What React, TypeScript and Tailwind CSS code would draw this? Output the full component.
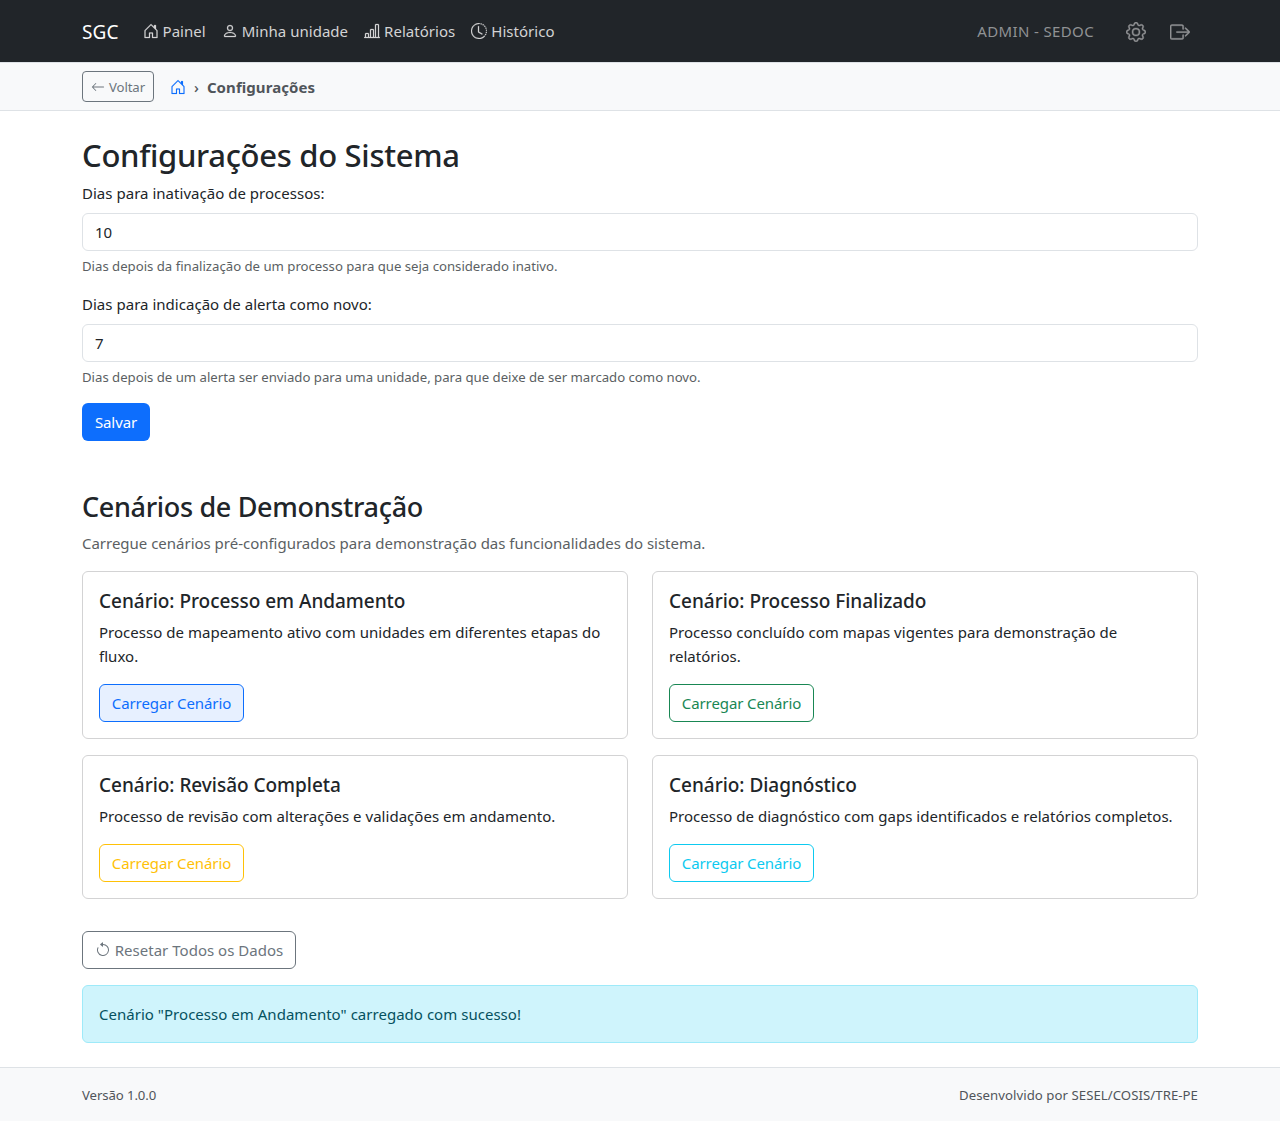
import type { ReactNode } from 'react';
import {
  BsHouseDoor,
  BsPerson,
  BsBarChartLine,
  BsClockHistory,
  BsGear,
  BsBoxArrowRight,
  BsArrowLeft,
  BsArrowCounterclockwise,
} from 'react-icons/bs';

function Container({ className = '', children }: { className?: string; children: ReactNode }) {
  return <div className={`mx-auto w-[1140px] px-3 ${className}`}>{children}</div>;
}

function NavItem({ icon, children }: { icon: ReactNode; children: ReactNode }) {
  return (
    <a href="#" className="flex items-center gap-1 px-2 text-[#d3d3d4]">
      {icon}
      <span>{children}</span>
    </a>
  );
}

function Field({ label, value, help }: { label: string; value: string; help: string }) {
  return (
    <div className="mb-[15px]">
      <label className="mb-2 block leading-6">{label}</label>
      <input
        defaultValue={value}
        className="block h-[38px] w-full rounded-md border border-[#dee2e6] bg-white px-3 leading-6"
      />
      <div className="mt-[5px] text-[13.2px] leading-[21px] tracking-[-0.015px] text-[#5b5f63]">{help}</div>
    </div>
  );
}

const scenarios = [
  {
    title: 'Processo em Andamento',
    text: 'Processo de mapeamento ativo com unidades em diferentes etapas do fluxo.',
    button: 'border-[#0d6efd] bg-[#e7f0ff] text-[#0d6efd]',
  },
  {
    title: 'Processo Finalizado',
    text: 'Processo concluído com mapas vigentes para demonstração de relatórios.',
    button: 'border-[#198754] text-[#198754]',
  },
  {
    title: 'Revisão Completa',
    text: 'Processo de revisão com alterações e validações em andamento.',
    button: 'border-[#ffc107] text-[#ffc107]',
  },
  {
    title: 'Diagnóstico',
    text: 'Processo de diagnóstico com gaps identificados e relatórios completos.',
    button: 'border-[#0dcaf0] text-[#0dcaf0]',
  },
];

export default function App() {
  return (
    <div className="min-h-[1121px] bg-white font-['Noto_Sans',sans-serif] text-[15px] leading-6 tracking-[0.025px] text-[#212529]">
      <nav className="h-[62px] bg-[#212529]">
        <Container className="flex h-full items-center">
          <span className="mr-6 pt-px text-[19px] tracking-[0.1px] text-white">SGC</span>
          <div className="-ml-2 flex">
            <NavItem icon={<BsHouseDoor size={16} strokeWidth={0.25} />}>Painel</NavItem>
            <NavItem icon={<BsPerson size={16} strokeWidth={0.25} />}>Minha unidade</NavItem>
            <NavItem icon={<BsBarChartLine size={16} strokeWidth={0.25} />}>Relatórios</NavItem>
            <NavItem icon={<BsClockHistory size={16} strokeWidth={0.25} />}>Histórico</NavItem>
          </div>
          <div className="ml-auto flex items-center text-[#909294]">
            <span className="mr-8 tracking-[0.36px]">ADMIN - SEDOC</span>
            <BsGear size={20} strokeWidth={0.3} className="mt-px mr-6" />
            <BsBoxArrowRight size={20} strokeWidth={0.3} className="mt-px mr-2" />
          </div>
        </Container>
      </nav>

      <div className="h-[49px] border-y border-[#dee2e6] bg-[#f8f9fa]">
        <Container className="flex h-full items-center">
          <button className="mr-4 flex h-[31px] w-[72px] items-center justify-center gap-1 rounded border border-[#6c757d] text-[13.2px] tracking-[-0.1px] text-[#6c757d]">
            <BsArrowLeft size={14} />
            Voltar
          </button>
          <BsHouseDoor size={16} strokeWidth={0.15} className="text-[#0d6efd]" />
          <span className="mx-2 font-medium text-[#50555a]">›</span>
          <span className="font-bold tracking-[0.07px] text-[#50555a]">Configurações</span>
        </Container>
      </div>

      <Container className="pt-[25px] pb-6">
        <h1 className="mb-[7px] text-[31px] leading-[38.4px] font-medium tracking-[-0.3px]">Configurações do Sistema</h1>
        <Field
          label="Dias para inativação de processos:"
          value="10"
          help="Dias depois da finalização de um processo para que seja considerado inativo."
        />
        <Field
          label="Dias para indicação de alerta como novo:"
          value="7"
          help="Dias depois de um alerta ser enviado para uma unidade, para que deixe de ser marcado como novo."
        />
        <button className="block h-[38px] w-[68px] rounded-md bg-[#0d6efd] tracking-[-0.1px] text-white">Salvar</button>

        <h2 className="mt-[49px] mb-[7px] text-[27px] leading-[33.6px] font-medium tracking-[-0.33px]">
          Cenários de Demonstração
        </h2>
        <p className="mb-4 tracking-[-0.015px] text-[#5b5f63]">
          Carregue cenários pré-configurados para demonstração das funcionalidades do sistema.
        </p>
        <div className="grid grid-cols-2 gap-x-6 gap-y-4">
          {scenarios.map((s) => (
            <section key={s.title} className="rounded-md border border-[#d3d3d4] px-4 pt-[17px] pb-4">
              <h3 className="mb-[7px] text-[19px] leading-6 font-medium tracking-[-0.03px]">Cenário: {s.title}</h3>
              <p className="mb-4">{s.text}</p>
              <button className={`block h-[38px] w-[145px] rounded-md border tracking-[-0.1px] ${s.button}`}>
                Carregar Cenário
              </button>
            </section>
          ))}
        </div>
        <button className="mt-8 flex h-[38px] w-[214px] items-center justify-center gap-1 rounded-md border border-[#6c757d] text-[#6c757d]">
          <BsArrowCounterclockwise size={16} />
          Resetar Todos os Dados
        </button>
        <div className="mt-4 rounded-md border border-[#9eeaf9] bg-[#cff4fc] p-4 text-[#055160]">
          Cenário "Processo em Andamento" carregado com sucesso!
        </div>
      </Container>

      <footer className="h-[54px] border-t border-[#dee2e6] bg-[#f8f9fa] text-[13.2px] text-[#50555a]">
        <Container className="flex h-full items-center justify-between">
          <span className="tracking-[-0.1px]">Versão 1.0.0</span>
          <span className="tracking-[0.05px]">Desenvolvido por SESEL/COSIS/TRE-PE</span>
        </Container>
      </footer>
    </div>
  );
}
